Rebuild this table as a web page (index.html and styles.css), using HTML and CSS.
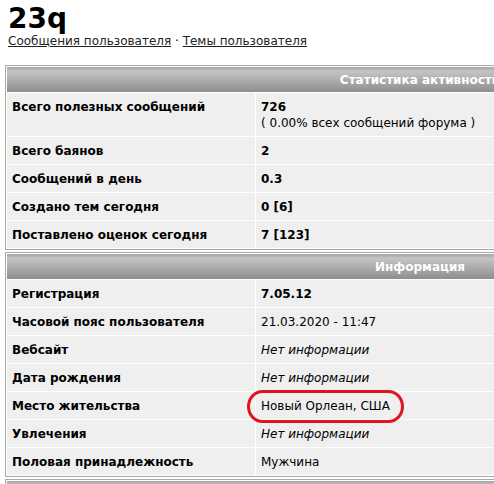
FILE: index.html
```html
<!DOCTYPE html>
<html lang="ru">
<head>
<meta charset="utf-8">
<title>23q</title>
<link rel="stylesheet" href="styles.css">
</head>
<body>
<div class="page">
  <h1 class="username">23q</h1>
  <div class="links">
    <a href="#">Сообщения пользователя</a> · <a href="#">Темы пользователя</a>
  </div>

  <table class="box">
    <tr><th colspan="2" class="box-head">Статистика активности</th></tr>
    <tr><td class="label">Всего полезных сообщений</td><td class="value"><b>726</b><br>( 0.00% всех сообщений форума )</td></tr>
    <tr><td class="label">Всего баянов</td><td class="value"><b>2</b></td></tr>
    <tr><td class="label">Сообщений в день</td><td class="value"><b>0.3</b></td></tr>
    <tr><td class="label">Создано тем сегодня</td><td class="value"><b>0 [6]</b></td></tr>
    <tr><td class="label">Поставлено оценок сегодня</td><td class="value"><b>7 [123]</b></td></tr>
  </table>

  <table class="box">
    <tr><th colspan="2" class="box-head">Информация</th></tr>
    <tr><td class="label">Регистрация</td><td class="value"><b>7.05.12</b></td></tr>
    <tr><td class="label">Часовой пояс пользователя</td><td class="value">21.03.2020 - 11:47</td></tr>
    <tr><td class="label">Вебсайт</td><td class="value"><i>Нет информации</i></td></tr>
    <tr><td class="label">Дата рождения</td><td class="value"><i>Нет информации</i></td></tr>
    <tr><td class="label">Место жительства</td><td class="value"><span class="marked">Новый Орлеан, США</span></td></tr>
    <tr><td class="label">Увлечения</td><td class="value"><i>Нет информации</i></td></tr>
    <tr><td class="label">Половая принадлежность</td><td class="value">Мужчина</td></tr>
  </table>

  <table class="box">
    <tr><th colspan="2" class="box-head">Подпись</th></tr>
  </table>
</div>
</body>
</html>
```
FILE: styles.css
```css
html, body {
  margin: 0;
  padding: 0;
  overflow: hidden;
  background: #fff;
}
body {
  font-family: "DejaVu Sans", Verdana, sans-serif;
  font-size: 12px;
  color: #000;
}
.page {
  padding: 4px 0 0 5px;
  width: 840px;
}
.username {
  margin: 0 0 0 3px;
  font-size: 28px;
  line-height: 30px;
  font-weight: bold;
}
.links {
  margin: 0 0 0 3px;
  line-height: 14px;
  font-size: 12px;
}
.links a {
  color: #222;
}
.box {
  width: 830px;
  margin-top: 17px;
  border: 1px solid #a8a8a8;
  border-spacing: 1px;
  padding: 0;
  background: #fff;
}
.box + .box {
  margin-top: 2px;
}
.box-head {
  height: 25px;
  padding: 0;
  background: linear-gradient(#a6a6a6 0%, #c4c4c4 18%, #a8a8a8 60%, #8e8e8e 100%);
  color: #fff;
  font-weight: bold;
  font-size: 12px;
  text-align: center;
}
.box td {
  background: #efefef;
  padding: 6px 5px 5px;
  line-height: 16px;
  vertical-align: top;
}
.label {
  width: 238px;
  font-weight: bold;
}
.value {
  padding-left: 4px;
}
.marked {
  position: relative;
}
.marked::after {
  content: "";
  position: absolute;
  left: -14px;
  right: -14px;
  top: -9px;
  bottom: -10px;
  border: 3px solid #e0141e;
  border-radius: 16px / 17px;
}
```
